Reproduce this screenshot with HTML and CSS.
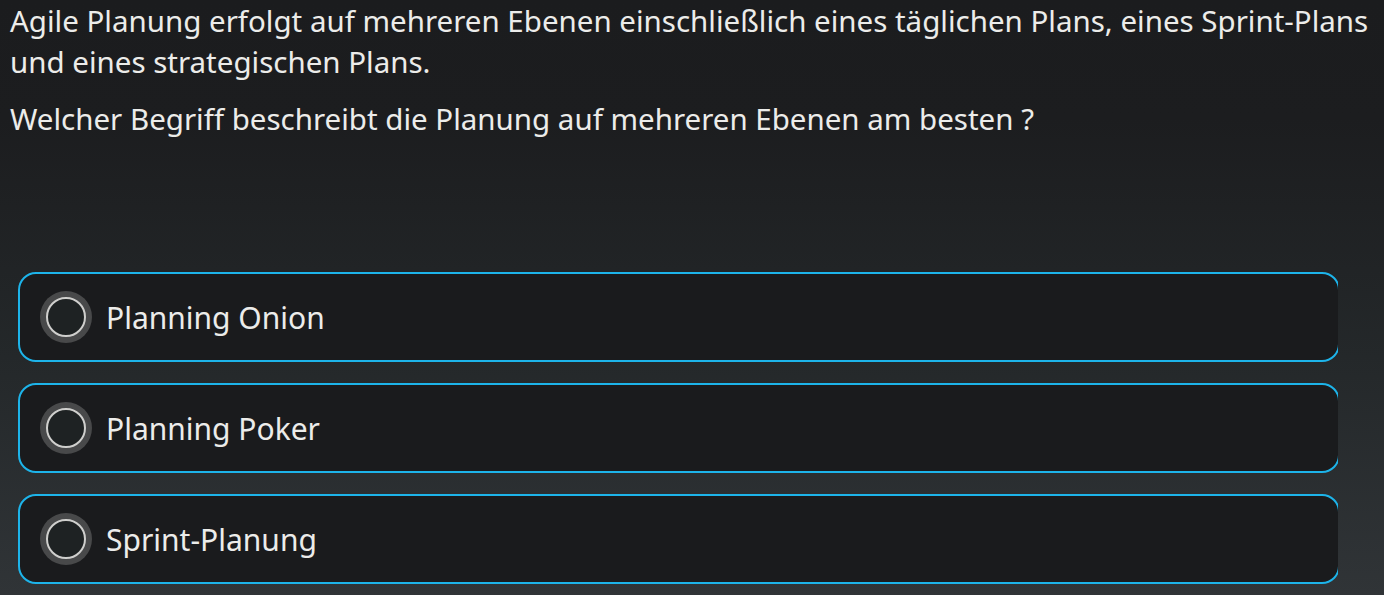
FILE: index.html
```html
<!DOCTYPE html>
<html lang="de">
<head>
<meta charset="utf-8">
<link rel="stylesheet" href="styles.css">
</head>
<body>
<main class="quiz">
  <div class="question">
    <p class="q-text">Agile Planung erfolgt auf mehreren Ebenen einschließlich eines täglichen Plans, eines Sprint-Plans und eines strategischen Plans.</p>
    <p class="q-text">Welcher Begriff beschreibt die Planung auf mehreren Ebenen am besten ?</p>
  </div>
  <div class="options">
    <label class="option">
      <span class="radio"><span class="radio-inner"></span></span>
      <span class="option-label">Planning Onion</span>
    </label>
    <label class="option">
      <span class="radio"><span class="radio-inner"></span></span>
      <span class="option-label">Planning Poker</span>
    </label>
    <label class="option">
      <span class="radio"><span class="radio-inner"></span></span>
      <span class="option-label">Sprint-Planung</span>
    </label>
  </div>
</main>
</body>
</html>
```

FILE: styles.css
```css
html, body {
  margin: 0;
  padding: 0;
  height: 100%;
}
body {
  background: linear-gradient(180deg, #1b1c1e 0%, #1c1d1f 20%, #24282a 60%, #303437 100%);
  color: #ececea;
  font-family: "Noto Sans", "Open Sans", sans-serif;
  overflow: hidden;
}
.quiz {
  display: flex;
  flex-direction: column;
  padding: 0 4px 0 10px;
}
.question {
  display: flex;
  flex-direction: column;
  gap: 16px;
}
.q-text {
  margin: 0;
  font-size: 29.5px;
  line-height: 41px;
}
.options {
  margin: 133px 42px 0 8px;
  overflow: hidden;
  display: flex;
  flex-direction: column;
  gap: 21px;
}
.option {
  display: flex;
  align-items: center;
  gap: 14px;
  width: calc(100% + 2px);
  box-sizing: border-box;
  height: 90px;
  padding: 0 20px;
  border: 2px solid #1db4ea;
  border-radius: 18px;
  background: #1a1b1d;
}
.radio {
  width: 52px;
  height: 52px;
  border-radius: 50%;
  background: #48494a;
  display: flex;
  align-items: center;
  justify-content: center;
  flex: none;
}
.radio-inner {
  width: 36px;
  height: 36px;
  border-radius: 50%;
  border: 2px solid #cfcfcd;
  background: #1e2223;
}
.option-label {
  font-size: 30px;
  color: #ececea;
}
```
